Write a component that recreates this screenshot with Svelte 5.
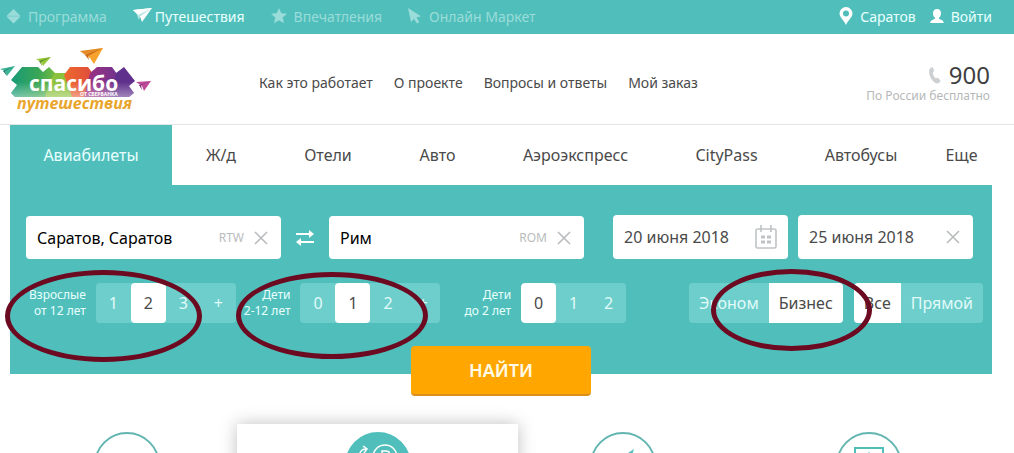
<script lang="ts">
  let from = $state('Саратов, Саратов');
  let to = $state('Рим');
  let departure = $state('20 июня 2018');
  let comeback = $state('25 июня 2018');

  const tabs = ['Авиабилеты', 'Ж/д', 'Отели', 'Авто', 'Аэроэкспресс', 'CityPass', 'Автобусы', 'Еще'];
  let activeTab = $state('Авиабилеты');

  const links = ['Как это работает', 'О проекте', 'Вопросы и ответы', 'Мой заказ'];

  let passengers = $state([
    { id: 'adults', title: 'Взрослые', age: 'от 12 лет', options: ['1', '2', '3', '+'], value: '2' },
    { id: 'children', title: 'Дети', age: '2-12 лет', options: ['0', '1', '2', '+'], value: '1' },
    { id: 'infants', title: 'Дети', age: 'до 2 лет', options: ['0', '1', '2'], value: '0' }
  ]);

  let filters = $state([
    { id: 'cabin', label: 'Класс', options: ['Эконом', 'Бизнес'], value: 'Бизнес' },
    { id: 'route', label: 'Рейс', options: ['Все', 'Прямой'], value: 'Все' }
  ]);

  function swap() {
    [from, to] = [to, from];
  }
</script>

{#snippet cross()}
  <svg width="14" height="14" viewBox="0 0 14 14"><path d="M1 1l12 12M13 1L1 13" stroke="#b9bcbd" stroke-width="1.6" fill="none" /></svg>
{/snippet}

<div class="page">
  <nav class="topbar">
    <a class="program" href="#program">
      <svg width="15" height="15" viewBox="0 0 15 15" fill="currentColor"><path d="M7.5 0L14 6.6H1zM1 8h13L7.500 14.500z" /><path d="M1 6h13v2.500H1z" opacity=".7" /></svg>
      Программа
    </a>
    <a class="travel current" href="#travel">
      <svg width="20" height="16" viewBox="0 0 20 16"><path d="M0 2L19 0 9 14 7 8.500z" fill="#fff" /><path d="M19 0L7 8.500 6 12 4 7z" fill="#b9e6e4" /><path d="M0 2L19 0 5 7z" fill="#fff" /></svg>
      Путешествия
    </a>
    <a class="impressions" href="#impressions">
      <svg width="16" height="16" viewBox="0 0 16 16" fill="currentColor"><path d="M8 0l2.300 5.200 5.700.5-4.300 3.800L13 15.200l-5-3-5 3 1.300-5.700L0 5.700l5.700-.5z" /></svg>
      Впечатления
    </a>
    <a class="market" href="#market">
      <svg width="14" height="16" viewBox="0 0 14 16" fill="currentColor"><path d="M0 0l13 8.200-4.600 1.200 3 4.500-2.400 1.500-3-4.500L3 14z" /></svg>
      Онлайн Маркет
    </a>
    <div class="account">
      <a class="current" href="#city">
        <svg width="14" height="18" viewBox="0 0 14 18"><path fill="#fff" fill-rule="evenodd" d="M7 0a6.500 6.500 0 0 1 6.500 6.500C13.500 10 9 13.500 7 18 5 13.500.5 10 .5 6.500A6.500 6.500 0 0 1 7 0zm0 3.500a3 3 0 1 0 0 6 3 3 0 0 0 0-6z" /></svg>
        Саратов
      </a>
      <a class="current login" href="#login">
        <svg width="14" height="15" viewBox="0 0 14 15"><path fill="#fff" d="M7 0c2.600 0 4 1.700 4 4.200 0 2-.8 3.600-2 4.600v1c1 .9 4.700 1 4.700 4.200H.3C.3 10.800 4 10.700 5 9.800v-1c-1.200-1-2-2.600-2-4.600C3 1.700 4.400 0 7 0z" /></svg>
        Войти
      </a>
    </div>
  </nav>

  <header>
    <a class="logo" href="#home" aria-label="Спасибо Путешествия">
      <svg width="155" height="72" viewBox="0 44 155 72">
        <defs>
          <linearGradient id="fade" x1="0" y1="0" x2="0" y2="1">
            <stop offset=".5" stop-color="#fff" stop-opacity="0" />
            <stop offset="1" stop-color="#fff" stop-opacity=".4" />
          </linearGradient>
          <linearGradient id="green" x1="0" x2="1">
            <stop offset="0" stop-color="#179b7a" />
            <stop offset=".6" stop-color="#3aa655" />
            <stop offset="1" stop-color="#7fbd3f" />
          </linearGradient>
          <linearGradient id="red" x1="0" x2="1">
            <stop offset="0" stop-color="#ee6a2c" />
            <stop offset="1" stop-color="#dc4640" />
          </linearGradient>
          <linearGradient id="violet" x1="0" x2="1">
            <stop offset="0" stop-color="#a3307f" />
            <stop offset="1" stop-color="#6b3490" />
          </linearGradient>
        </defs>
        <path fill="url(#green)" d="M22 68h16l5 5 6-5 8 8v22H15l-4-4 6-8-6-5z" />
        <path fill="#8dc23f" d="M55 74h11l8 8v16H45l6-18z" />
        <path fill="url(#red)" d="M70 68h18l10 14-4 16H72l-8-22z" />
        <path fill="url(#violet)" d="M97 68h15l10 14v16H84l6-24z" />
        <path fill="#60318c" d="M124 68l11 14-6 5 5 7-5 4h-19l6-24z" />
        <path fill="url(#fade)" d="M22 68h16l5 5 6-5 7 6h9l5-6h18l4 5 5-5h15l5 5 7-5 11 14-6 5 5 7-5 4H15l-4-4 6-8-6-5z" />
        <path fill="#3fb497" d="M0 70l15-3-8 10-2-5z" /><path fill="#167c70" d="M15 67L5 72l2 5-4-5z" />
        <path fill="#9aca3c" d="M36 60l15-2-8 9-2-4z" /><path fill="#5b9129" d="M51 58l-10 5 1 4-3-5z" />
        <path fill="#f6a22d" d="M80 52l23-3-9 16-4-6z" /><path fill="#cb6b1e" d="M80 52l23-3-18 7z" opacity=".4" /><path fill="#cb6b1e" d="M103 49l-15 8 1 4-4-5z" />
        <path fill="#c04a98" d="M136 83l15-1-7 10-2-5z" /><path fill="#7c2f77" d="M151 82l-10 4 1 5-3-5z" />
        <text class="brand" x="29" y="92">спасибо</text>
        <text class="bank" x="80" y="97">ОТ СБЕРБАНКА</text>
        <text class="sub" x="17" y="110">путешествия</text>
      </svg>
    </a>
    <nav class="links">
      {#each links as link}
        <a href="#info">{link}</a>
      {/each}
    </nav>
    <div class="phone">
      <a href="tel:900">
        <svg width="12" height="17" viewBox="0 0 12 17"><path fill="#cdd0d3" d="M3.500 0l1.800 3.700-1.500 1.700c.1 2 1.300 4.500 3 5.900l2-.6 2.700 2.900c-.5 1.800-1.800 3-3.500 3C3.500 15.500-.5 9 .2 3.500.6 1.500 1.800.3 3.500 0z" /></svg>
        900
      </a>
      <span>По России бесплатно</span>
    </div>
  </header>

  <main>
    <div class="tabs" role="tablist">
      {#each tabs as tab}
        <button role="tab" aria-selected={tab === activeTab} class:active={tab === activeTab} onclick={() => (activeTab = tab)}>{tab}</button>
      {/each}
    </div>

    <form class="search" onsubmit={(e) => e.preventDefault()}>
      <div class="fields">
        <div class="field city">
          <input aria-label="Откуда" bind:value={from} />
          <span>RTW</span>
          <button type="button" aria-label="Очистить" onclick={() => (from = '')}>{@render cross()}</button>
        </div>
        <button class="swap" type="button" aria-label="Поменять местами" onclick={swap}>
          <svg width="20" height="16" viewBox="0 0 20 16" fill="#fff"><path d="M1 3h13V0l5 4-5 4V5H1zM19 11H6V8l-5 4 5 4v-3h13z" /></svg>
        </button>
        <div class="field city">
          <input aria-label="Куда" bind:value={to} />
          <span>ROM</span>
          <button type="button" aria-label="Очистить" onclick={() => (to = '')}>{@render cross()}</button>
        </div>
        <div class="dates">
          <div class="field">
            <input aria-label="Туда" bind:value={departure} />
            <button class="calendar" type="button" aria-label="Календарь">
              <svg width="22" height="24" viewBox="0 0 22 24" fill="none" stroke="#bfc3c5" stroke-width="1.600"><rect x="1" y="4" width="20" height="19" rx="1.500" /><path d="M6 0v7M16 0v7" /><path d="M6 12h4M12 12h4M6 17h4M12 17h4" stroke-width="3" /></svg>
            </button>
          </div>
          <div class="field">
            <input aria-label="Обратно" bind:value={comeback} />
            <button type="button" aria-label="Очистить" onclick={() => (comeback = '')}>{@render cross()}</button>
          </div>
        </div>
      </div>

      <div class="options">
        {#each passengers as group}
          <div class="passenger">
            <span class="caption" id={group.id}>{group.title}<br />{group.age}</span>
            <div class="picker count" role="group" aria-labelledby={group.id}>
              {#each group.options as option}
                <button type="button" class:active={option === group.value} onclick={() => (group.value = option)}>{option}</button>
              {/each}
            </div>
          </div>
        {/each}
        <div class="filters">
          {#each filters as filter}
            <div class="picker" role="group" aria-label={filter.label}>
              {#each filter.options as option}
                <button type="button" class:active={option === filter.value} onclick={() => (filter.value = option)}>{option}</button>
              {/each}
            </div>
          {/each}
        </div>
      </div>

      <button class="submit">НАЙТИ</button>

      <i class="mark adults"></i>
      <i class="mark children"></i>
      <i class="mark cabin"></i>
    </form>
  </main>

  <section class="features">
    <div class="feature"><div class="circle"></div></div>
    <div class="feature raised">
      <div class="circle filled">
        <svg width="62" height="62" viewBox="0 0 62 62" fill="none" stroke="#fff" stroke-width="1.500"><path d="M12 25c0-6 2-10 7-10M16 12l4 3-3 4" /><circle cx="38" cy="23" r="12" /><path d="M35 32V17h4c5 0 5 7 0 7h-6" /></svg>
      </div>
    </div>
    <div class="feature">
      <div class="circle">
        <svg width="62" height="62" viewBox="0 0 62 62"><path fill="#50bfbb" d="M42 15l-9 6-15 18 7 3 14-18z" /></svg>
      </div>
    </div>
    <div class="feature">
      <div class="circle">
        <svg width="62" height="62" viewBox="0 0 62 62" fill="none" stroke="#50bfbb" stroke-width="2"><path d="M17 46V14h28v32z" /><path d="M31 18v4" stroke-width="1" /></svg>
      </div>
    </div>
  </section>
</div>

<style>
  :global(body) {
    margin: 0;
    background: #fff;
  }
  .page {
    display: flex;
    flex-direction: column;
    height: 100vh;
    overflow: hidden;
    font-family: 'Noto Sans', 'Open Sans', sans-serif;
    color: #4a4a4a;
  }
  a {
    color: inherit;
    text-decoration: none;
  }
  button, input {
    font: inherit;
    color: inherit;
    border: 0;
    padding: 0;
    background: none;
  }
  button {
    cursor: pointer;
  }
  svg {
    display: block;
    flex: none;
  }
  .topbar {
    display: flex;
    align-items: center;
    flex: none;
    height: 34px;
    padding: 0 22px 2px 6px;
    box-sizing: border-box;
    background: #50bfbb;
    color: #9adcd9;
    font-size: 14px;
  }
  .topbar a {
    display: flex;
    align-items: center;
    gap: 7px;
  }
  .topbar > a {
    margin-right: 26px;
  }
  .topbar .travel {
    gap: 2px;
  }
  .topbar .current {
    color: #e9ffff;
  }
  .account {
    display: flex;
    gap: 14px;
    margin-left: auto;
  }
  header {
    display: flex;
    align-items: center;
    flex: none;
    height: 90px;
    padding-right: 24px;
    border-bottom: 1px solid #e4e6e6;
  }
  .logo {
    width: 259px;
  }
  .brand {
    font: bold 21px 'Open Sans', sans-serif;
    fill: #fff;
  }
  .bank {
    font: bold 5px 'Open Sans', sans-serif;
    fill: #fff;
  }
  .sub {
    font: italic bold 16px 'Open Sans', sans-serif;
    fill: #e9a52c;
  }
  .links {
    display: flex;
    gap: 21px;
    padding-top: 7px;
    font-size: 14px;
  }
  .phone {
    margin-left: auto;
    padding-top: 8px;
    text-align: right;
    font-size: 12px;
    line-height: 16px;
    color: #b5b8b9;
  }
  .phone a {
    display: flex;
    justify-content: flex-end;
    align-items: center;
    gap: 8px;
    font-size: 24px;
    line-height: 26px;
    color: #3f3f3f;
  }
  main {
    flex: none;
    margin: 0 22px 0 10px;
  }
  .tabs {
    display: grid;
    grid-template-columns: 162fr 98fr 116fr 103fr 173fr 129fr 140fr 61fr;
    height: 60px;
    font-size: 16px;
  }
  .tabs .active {
    background: #50bfbb;
    color: #e9ffff;
  }
  .search {
    position: relative;
    padding: 30px 0 51px;
    background: #50bfbb;
  }
  .fields {
    display: flex;
    align-items: flex-end;
    padding: 0 19px 0 16px;
  }
  .field {
    display: flex;
    align-items: center;
    flex: 1;
    min-width: 0;
    height: 44px;
    padding: 0 11px;
    box-sizing: border-box;
    border-radius: 4px;
    background: #fff;
    font-size: 16px;
  }
  .field.city {
    height: 43px;
    color: #000;
  }
  .field input {
    flex: 1;
    width: 0;
    min-width: 0;
    outline: 0;
  }
  .field span {
    margin: 0 10px;
    font-size: 12px;
    color: #b9bcbd;
  }
  .field button {
    margin-right: 2px;
  }
  .field .calendar {
    margin-right: 0;
  }
  .swap {
    width: 48px;
    height: 43px;
    display: grid;
    place-items: center;
  }
  .dates {
    display: flex;
    gap: 10px;
    width: 360px;
    margin-left: 29px;
  }
  .options {
    display: flex;
    gap: 8px;
    padding: 24px 9px 0 19px;
  }
  .passenger {
    display: flex;
    align-items: center;
    gap: 10px;
  }
  .passenger:nth-child(3) {
    margin-left: 16px;
  }
  .caption {
    text-align: right;
    font-size: 12px;
    line-height: 16px;
    white-space: nowrap;
    color: #e9ffff;
  }
  .picker {
    display: flex;
    border-radius: 4px;
    overflow: hidden;
    background: #6dcecb;
    color: #e2fbfa;
    font-size: 16px;
  }
  .picker button {
    height: 40px;
    padding: 0 10px;
  }
  .picker.count button {
    width: 35px;
    padding: 0;
    border-radius: 4px;
  }
  .picker .active {
    background: #fff;
    color: #4a4a4a;
  }
  .filters {
    display: flex;
    gap: 11px;
    margin-left: auto;
  }
  .submit {
    position: absolute;
    left: 50%;
    bottom: -22px;
    width: 180px;
    height: 50px;
    margin-left: -90px;
    border-bottom: 2px solid #d9901a;
    border-radius: 4px;
    background: #ffa700;
    color: #fffbe6;
    font-size: 18px;
    font-weight: 600;
  }
  .mark {
    position: absolute;
    box-sizing: border-box;
    border: 5px solid #6b0a20;
    border-radius: 50%;
    pointer-events: none;
  }
  .mark.adults {
    left: -5px;
    top: 85px;
    width: 197px;
    height: 92px;
  }
  .mark.children {
    left: 226px;
    top: 87px;
    width: 192px;
    height: 87px;
  }
  .mark.cabin {
    right: 120px;
    top: 84px;
    width: 161px;
    height: 82px;
  }
  .features {
    display: grid;
    grid-template-columns: 220fr 281fr 210fr 282fr;
    flex: 1;
    min-height: 0;
    padding: 50px 4px 0 17px;
  }
  .feature {
    display: flex;
    justify-content: center;
    padding-top: 8px;
    height: 200px;
  }
  .raised {
    background: #fff;
    box-shadow: 0 0 16px rgba(0, 0, 0, 0.25);
  }
  .circle {
    width: 62px;
    height: 62px;
    border: 2px solid #62b5b0;
    border-radius: 50%;
  }
  .filled {
    background: #50bfbb;
    border-color: #50bfbb;
  }
</style>
